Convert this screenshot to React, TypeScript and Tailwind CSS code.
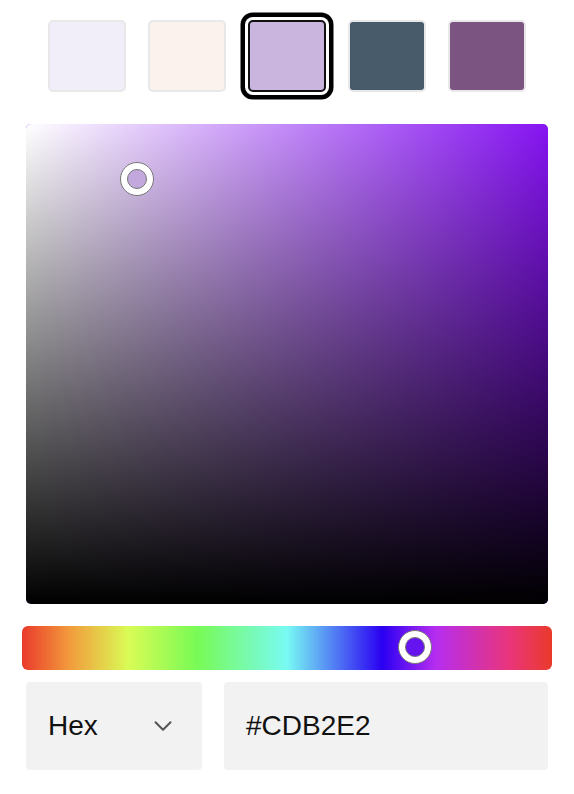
import { ChevronDown } from 'lucide-react'

const swatches = ['#f1eef9', '#fbf2ee', '#c9b5de', '#475b6b', '#7b5482']
const selected = 2

const hue =
  'linear-gradient(to right, #ea3a2b 0%, #f29b3c 9%, #dafb55 20%, #78fa55 33%, #78faf3 50%, #2a00f2 68%, #b52df0 78%, #e9357a 92%, #ea3a2b 100%)'

function Thumb({ color }: { color: string }) {
  return (
    <div className="grid h-[34px] w-[34px] place-items-center rounded-full border-[1.5px] border-[#777] bg-white">
      <div className="h-[20px] w-[20px] rounded-full border-[1.5px] border-[#777]" style={{ background: color }} />
    </div>
  )
}

export default function App() {
  return (
    <div className="h-[794px] w-[574px] bg-white" style={{ fontFamily: '"Liberation Sans", Arial, sans-serif' }}>
      <div className="flex justify-center gap-[22px] pt-[20px]">
        {swatches.map((c, i) => (
          <div
            key={c}
            className={
              'h-[72px] w-[78px] rounded-[5px] border-2 ' +
              (i === selected
                ? 'border-[#111] ring-[4.5px] ring-black ring-offset-[3px] ring-offset-white'
                : 'border-[#e8e8e8]')
            }
            style={{ background: c }}
          />
        ))}
      </div>

      <div className="relative mx-[26px] mt-[32px] h-[480px] overflow-hidden rounded-[5px] bg-[#8614f2]">
        <div className="absolute inset-0 bg-gradient-to-r from-white to-transparent" />
        <div className="absolute inset-0 bg-gradient-to-b from-transparent to-black" />
        <div className="absolute left-[94px] top-[38px]">
          <Thumb color="#c2a8dc" />
        </div>
      </div>

      <div className="relative mx-[22px] mt-[22px] h-[44px] rounded-[6px]" style={{ background: hue }}>
        <div className="absolute left-[376px] top-[4px]">
          <Thumb color="#6514f0" />
        </div>
      </div>

      <div className="mx-[26px] mt-[12px] flex gap-[22px]">
        <div className="flex h-[88px] w-[176px] items-center justify-between rounded-[4px] bg-[#f2f2f2] pl-[22px] pr-[24px]">
          <span className="text-[28px] text-[#111]">Hex</span>
          <ChevronDown size={30} strokeWidth={1.6} className="text-[#555]" />
        </div>
        <div className="flex h-[88px] flex-1 items-center rounded-[4px] bg-[#f2f2f2] pl-[22px]">
          <span className="text-[28px] text-[#111]">#CDB2E2</span>
        </div>
      </div>
    </div>
  )
}
